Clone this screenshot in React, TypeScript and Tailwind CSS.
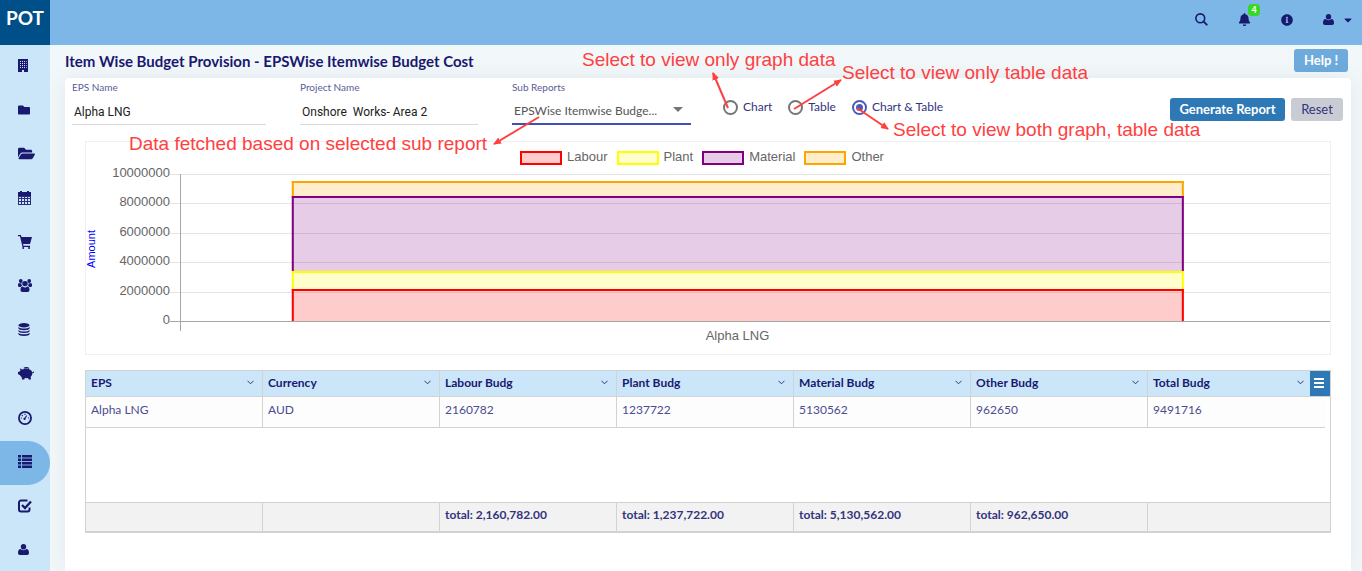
import type { ReactNode } from "react";
import { FaBell, FaCaretDown, FaFolder, FaFolderOpen, FaInfoCircle } from "react-icons/fa";

function BuildingIcon() {
  return (
    <svg width="10" height="13" viewBox="0 0 10 13" fill="currentColor" fillRule="evenodd">
      <path d="M0 0h10v13H6v-2H4v2H0zM2 2v1h1V2zM4 2v1h1V2zM6 2v1h1V2zM8 2v1h.6V2zM2 4v1h1V4zM4 4v1h1V4zM6 4v1h1V4zM8 4v1h.6V4zM2 6v1h1V6zM4 6v1h1V6zM6 6v1h1V6zM8 6v1h.6V6zM2 8v1h1V8zM4 8v1h1V8zM6 8v1h1V8zM8 8v1h.6V8z" />
    </svg>
  );
}

function CalendarIcon() {
  return (
    <svg width="13" height="14" viewBox="0 0 13 14" fill="currentColor" fillRule="evenodd">
      <path d="M2 0h2v1h5V0h2v1h2v4H0V1h2z" />
      <path d="M0 5h13v9H0zM1 6v1h2V6zM4 6v1h2V6zM7 6v1h2V6zM10 6v1h2V6zM1 8v2h2V8zM4 8v2h2V8zM7 8v2h2V8zM10 8v2h2V8zM1 11v2h2v-2zM4 11v2h2v-2zM7 11v2h2v-2zM10 11v2h2v-2z" fillOpacity="0.9" />
    </svg>
  );
}

function CartIcon() {
  return (
    <svg width="14" height="14" viewBox="0 0 14 14" fill="currentColor">
      <path d="M0 0h2.800l.8 2H14l-2 7H5l.5 1.700H12v1.200H4.500L2 1.200H0z" />
      <circle cx="5.200" cy="13" r="1" />
      <circle cx="11" cy="13" r="1" />
    </svg>
  );
}

function TeamIcon() {
  return (
    <svg width="14" height="13" viewBox="0 0 14 13" fill="currentColor">
      <circle cx="2.800" cy="2" r="1.900" />
      <circle cx="11.200" cy="2" r="1.900" />
      <circle cx="7" cy="4.600" r="2.700" />
      <path d="M0 5.500C0 4.600.5 4.200 1.200 4.200h2.300c-.2 1.200.1 2.100.8 2.900-.8.100-1.300.4-1.700.9H1.200C.4 8 0 7.500 0 6.800zM14 5.500c0-.9-.5-1.300-1.200-1.300h-2.300c.2 1.200-.1 2.100-.8 2.900.8.100 1.300.4 1.700.9h1.400c.8 0 1.200-.5 1.200-1.200z" />
      <path d="M2.500 11c0-2.300.8-3.400 2.200-3.400.7.600 1.400.9 2.300.9s1.600-.3 2.300-.9c1.400 0 2.200 1.100 2.200 3.400 0 1.300-.7 2-1.900 2H4.400c-1.200 0-1.900-.7-1.900-2z" />
    </svg>
  );
}

function DatabaseIcon() {
  return (
    <svg width="12" height="13" viewBox="0 0 12 13" fill="currentColor">
      <ellipse cx="6" cy="2.200" rx="5.600" ry="2.200" />
      <path d="M.4 4c1.200 1.100 3.200 1.500 5.600 1.500s4.400-.4 5.600-1.500v1.200C11.600 6.400 9.100 7.200 6 7.200S.4 6.400.4 5.200zM.4 6.900C1.600 8 3.600 8.400 6 8.400s4.400-.4 5.600-1.500v1.200c0 1.200-2.500 2-5.600 2s-5.600-.8-5.600-2zM.4 9.800c1.200 1.100 3.200 1.500 5.600 1.500s4.400-.4 5.600-1.500V11c0 1.200-2.500 2-5.600 2S.4 12.200.4 11z" />
    </svg>
  );
}

function PiggyIcon() {
  return (
    <svg width="16" height="13" viewBox="0 0 16 13" fill="currentColor">
      <path d="M5.500 1.100C6.300.3 7.300 0 8.500 0s2.200.4 2.900 1.200l-.6.600C9.300 1.300 7.700 1.300 6 1.800z" />
      <path d="M1.800 1.200l2.500 1.300C5.400 2 6.800 1.800 8.300 1.800c3.300 0 5.400 1.400 5.900 3.500.6.100 1-.2 1-.9h.8c0 1.200-.6 1.900-1.700 1.900 0 1.500-.6 2.600-1.600 3.500L13 12.500h-2.400l-.5-1.400c-1 .2-2.200.2-3.300 0l-.5 1.400H4l-.3-2.400C2.900 9.600 2.200 8.900 1.900 8L0 7.300V4.900l1.600-.4c.2-.4.5-.7.9-1z" />
    </svg>
  );
}

function GaugeIcon() {
  return (
    <svg width="14" height="14" viewBox="0 0 15 15" fill="none" stroke="currentColor">
      <circle cx="7.500" cy="7.500" r="6.500" strokeWidth="1.900" />
      <path d="M7 8.300L9.500 4.800" strokeWidth="1.300" />
      <circle cx="7" cy="8.500" r="1.200" fill="currentColor" stroke="none" />
      <path d="M3 7.500h1.200M10.800 7.500H12M4.200 4.500l.9.900M7.500 3v1.200" strokeWidth="1.200" />
    </svg>
  );
}

function ListIcon() {
  return (
    <svg width="14" height="13" viewBox="0 0 14 13" fill="currentColor">
      <path d="M0 0h3v2.500H0zM4 0h10v2.500H4zM0 3.500h3V6H0zM4 3.500h10V6H4zM0 7h3v2.500H0zM4 7h10v2.500H4zM0 10.500h3V13H0zM4 10.500h10V13H4z" />
    </svg>
  );
}

function CheckIcon() {
  return (
    <svg width="14" height="14" viewBox="0 0 14 14" fill="none" stroke="currentColor" strokeWidth="2">
      <path d="M9.500 1.500H3a2 2 0 0 0-2 2v7a2 2 0 0 0 2 2h6.500a2 2 0 0 0 2-2V8.500" />
      <path d="M4 6l3 3 6-6.500" strokeWidth="2.400" />
    </svg>
  );
}

function PersonIcon() {
  return (
    <svg width="11" height="11" viewBox="0 0 11 11" fill="currentColor">
      <ellipse cx="5.500" cy="2.800" rx="2.700" ry="2.800" />
      <path d="M0 9c0-2.600.9-3.900 2.700-4 .8.800 1.700 1.200 2.800 1.200S7.500 5.800 8.300 5C10.100 5.100 11 6.400 11 9c0 1.300-.7 2-1.900 2H1.900C.7 11 0 10.300 0 9z" />
    </svg>
  );
}

function SearchIcon() {
  return (
    <svg width="13" height="13" viewBox="0 0 13 13" fill="none" stroke="currentColor" strokeLinecap="round">
      <circle cx="5.300" cy="5.300" r="4.400" strokeWidth="1.600" />
      <path d="M8.700 8.700L11.700 11.700" strokeWidth="1.900" />
    </svg>
  );
}

const navItems: { label: string; icon: ReactNode }[] = [
  { label: "Company", icon: <BuildingIcon /> },
  { label: "Files", icon: <FaFolder size={12} /> },
  { label: "Projects", icon: <FaFolderOpen size={17} /> },
  { label: "Calendar", icon: <CalendarIcon /> },
  { label: "Procurement", icon: <CartIcon /> },
  { label: "Teams", icon: <TeamIcon /> },
  { label: "Data", icon: <DatabaseIcon /> },
  { label: "Budget", icon: <PiggyIcon /> },
  { label: "Dashboard", icon: <GaugeIcon /> },
  { label: "Reports", icon: <ListIcon /> },
  { label: "Approvals", icon: <CheckIcon /> },
  { label: "Account", icon: <PersonIcon /> },
];

const series = [
  { name: "Labour", value: 2160782, stroke: "#ff0000", fill: "#ffcccc" },
  { name: "Plant", value: 1237722, stroke: "#ffff00", fill: "#ffffcc" },
  { name: "Material", value: 5130562, stroke: "#800080", fill: "#e6cce6" },
  { name: "Other", value: 962650, stroke: "#ffa500", fill: "#ffedcc" },
];

const columns = [
  { name: "EPS", value: "Alpha LNG", total: "" },
  { name: "Currency", value: "AUD", total: "" },
  { name: "Labour Budg", value: "2160782", total: "total: 2,160,782.00" },
  { name: "Plant Budg", value: "1237722", total: "total: 1,237,722.00" },
  { name: "Material Budg", value: "5130562", total: "total: 5,130,562.00" },
  { name: "Other Budg", value: "962650", total: "total: 962,650.00" },
  { name: "Total Budg", value: "9491716", total: "" },
];

const ticks = [10000000, 8000000, 6000000, 4000000, 2000000, 0];
const plotHeight = 147;
const axisMax = 10000000;

function Header() {
  return (
    <header className="flex h-[45px] shrink-0 bg-[#7cb7e8] text-[#191970]">
      <a href="#home" className="flex w-[50px] justify-center bg-[#004f89] pt-1 text-[19px]/7 font-bold text-white">
        POT
      </a>
      <div className="flex flex-1 items-center justify-end gap-[30px] pr-2 pb-[6px]">
        <button aria-label="Search"><SearchIcon /></button>
        <button aria-label="Notifications" className="relative">
          <FaBell size={13} />
          <span className="absolute -top-[9px] left-[10px] h-3 w-3 rounded-sm bg-[#35d923] text-center text-[9px]/3 font-bold text-white">4</span>
        </button>
        <button aria-label="Information"><FaInfoCircle size={12} /></button>
        <button aria-label="Account menu" className="flex items-center gap-2">
          <PersonIcon />
          <FaCaretDown size={12} />
        </button>
      </div>
    </header>
  );
}

function Sidebar() {
  return (
    <nav className="w-[50px] shrink-0 overflow-hidden bg-[#cbe6f9] text-[#191970]">
      {navItems.map((item) => (
        <a
          key={item.label}
          href="#nav"
          aria-label={item.label}
          className={
            item.label === "Reports"
              ? "flex h-11 items-center rounded-r-full bg-[#7cb7e8] pb-[3px] pl-[18px]"
              : "flex h-11 items-center pb-[3px] pl-[18px]"
          }
        >
          {item.icon}
        </a>
      ))}
    </nav>
  );
}

function TextField({ id, label, value, className }: { id: string; label: string; value: string; className: string }) {
  return (
    <div className={className}>
      <label htmlFor={id} className="block text-[10px]/[19px] text-[#5b5b9d]">{label}</label>
      <input
        id={id}
        defaultValue={value}
        className="block h-[28px] w-full border-b border-[#d9d9d9] px-0.5 pt-0.5 font-['Roboto',sans-serif] text-xs text-[#212121] outline-none"
      />
    </div>
  );
}

function Filters() {
  return (
    <div className="flex h-[63px] items-start px-[7px]">
      <TextField id="eps" label="EPS Name" value="Alpha LNG" className="mr-[34px] w-[194px]" />
      <TextField id="project" label="Project Name" value="Onshore  Works- Area 2" className="mr-[34px] w-[178px]" />
      <div className="mr-8 w-[179px]">
        <label htmlFor="sub" className="block text-[10px]/[19px] text-[#5b5b9d]">Sub Reports</label>
        <div className="relative">
          <select
            id="sub"
            className="block h-[28px] w-full appearance-none border-b-2 border-[#3f51b5] bg-transparent px-0.5 pt-0.5 text-xs text-[#555] outline-none"
          >
            <option>EPSWise Itemwise Budge...</option>
          </select>
          <span className="pointer-events-none absolute top-[10px] right-2 border-x-5 border-t-5 border-x-transparent border-t-[#757575]" />
        </div>
      </div>
      <div className="flex gap-4 pt-[19px] text-xs/5 text-[#34347e]">
        {["Chart", "Table", "Chart & Table"].map((name) => (
          <label key={name} className="flex items-center gap-[5px]">
            <input
              type="radio"
              name="view"
              defaultChecked={name === "Chart & Table"}
              className="size-[15px] appearance-none rounded-full border-2 border-[#757575] bg-white bg-clip-content p-0.5 checked:border-[#4a5abb] checked:bg-[#4a5abb]"
            />
            {name}
          </label>
        ))}
      </div>
      <div className="ml-auto flex gap-1.5 pt-5 pr-px text-[13px]">
        <button className="h-[23px] w-[115px] rounded-[3px] bg-[#2e79b5] font-bold text-white">Generate Report</button>
        <button className="h-[23px] w-[52px] rounded-[3px] bg-[#c9ccd3] text-[#34347e]">Reset</button>
      </div>
    </div>
  );
}

function Chart() {
  return (
    <section className="mx-5 h-[214px] border border-[#f0f0f0] font-['Liberation_Sans',sans-serif] text-[13px] text-[#666]">
      <ul className="flex h-8 items-center justify-center gap-[9px] pr-3">
        {series.map((item) => (
          <li key={item.name} className="flex items-center gap-[5px]">
            <span className="h-[14px] w-[42px] border-2" style={{ borderColor: item.stroke, backgroundColor: item.fill }} />
            <span className="pb-0.5 leading-4">{item.name}</span>
          </li>
        ))}
      </ul>
      <div className="flex h-[153px]">
        <div className="flex w-3 items-center justify-center pr-0.5 pb-1">
          <span className="rotate-180 text-[11px]/3 text-[#0000ff] [writing-mode:vertical-rl]">Amount</span>
        </div>
        <div className="-mt-[9px] flex h-[163px] w-[72px] flex-col justify-between text-right">
          {ticks.map((tick) => (
            <div key={tick} className="leading-4">{tick}</div>
          ))}
        </div>
        <svg className="h-[158px] flex-1" aria-hidden="true">
          {ticks.map((tick) => {
            const y = Math.round(((axisMax - tick) / axisMax) * plotHeight);
            return <rect key={tick} x="0" y={y} width="100%" height="1" fill={tick === 0 ? "#a6a6a6" : "#e4e4e4"} />;
          })}
          <rect x="10" y="0" width="1" height="157" fill="#a6a6a6" />
          <svg x="10.500%" width="76.900%" height="147" overflow="visible">
            {series.map((item, index) => {
              const sum = series.slice(0, index + 1).reduce((total, part) => total + part.value, 0);
              const top = Math.round(plotHeight - (sum / axisMax) * plotHeight);
              const bottom = Math.round(plotHeight - ((sum - item.value) / axisMax) * plotHeight);
              const height = bottom - top;
              return (
                <g key={item.name}>
                  <rect x="0" y={top} width="100%" height={height} fill={item.stroke} fillOpacity="0.2" />
                  <rect x="0" y={top} width="100%" height="2" fill={item.stroke} />
                  <rect x="0" y={top} width="2" height={height} fill={item.stroke} />
                  <svg x="100%" overflow="visible">
                    <rect x="-2" y={top} width="2" height={height} fill={item.stroke} />
                  </svg>
                </g>
              );
            })}
          </svg>
        </svg>
      </div>
      <div className="pt-px pl-[59px] text-center leading-4">Alpha LNG</div>
    </section>
  );
}

function ChevronDown() {
  return (
    <svg width="7" height="5" viewBox="0 0 7 5" fill="none" stroke="#34347e">
      <path d="M.5.8l3 3 3-3" />
    </svg>
  );
}

function BudgetTable() {
  return (
    <table className="w-full table-fixed border-separate border-spacing-0 border border-b-2 border-[#d2d2d2] text-left text-xs/4 text-[#34347e]">
      <colgroup>
        {columns.map((column) => (
          <col key={column.name} className={column.name === "Total Budg" ? "" : "w-[14.23%]"} />
        ))}
        <col className="w-[5px]" />
      </colgroup>
      <thead className="bg-[#cbe6f9] text-[#191970]">
        <tr>
          {columns.map((column) => {
            const last = column.name === "Total Budg";
            return (
              <th
                key={column.name}
                colSpan={last ? 2 : 1}
                className={last ? "h-[26px] border-b border-[#d2d2d2] p-0" : "h-[26px] border-r border-b border-[#d2d2d2] p-0"}
              >
                <div className="flex h-[25px] items-center justify-between pl-[5px]">
                  <span className="pb-0.5">{column.name}</span>
                  <span className="flex items-center">
                    <button aria-label={"Menu for " + column.name} className={last ? "mr-1.5 pb-0.5" : "mr-2 pb-0.5"}>
                      <ChevronDown />
                    </button>
                    {last && (
                      <button aria-label="Grid menu" className="flex h-[25px] w-5 flex-col items-center justify-center gap-0.5 bg-[#2e79b5] pr-0.5 pb-0.5">
                        <span className="h-0.5 w-2.5 bg-white" />
                        <span className="h-0.5 w-2.5 bg-white" />
                        <span className="h-0.5 w-2.5 bg-white" />
                      </button>
                    )}
                  </span>
                </div>
              </th>
            );
          })}
        </tr>
      </thead>
      <tbody className="text-[#4b4b90]">
        <tr>
          {columns.map((column) => (
            <td
              key={column.name}
              className="h-[31px] border-r border-b border-[#d2d2d2] bg-[#fdfdfd] px-[5px] py-0 pb-1 nth-7:border-r-0"
            >
              {column.value}
            </td>
          ))}
          <td />
        </tr>
        <tr>
          <td colSpan={8} className="h-[74px]" />
        </tr>
      </tbody>
      <tfoot className="bg-[#f2f2f2] font-bold">
        <tr>
          {columns.map((column) => (
            <td
              key={column.name}
              colSpan={column.name === "Total Budg" ? 2 : 1}
              className="h-[29px] border-t border-r border-[#d2d2d2] px-[5px] py-0 pb-1 last:border-r-0"
            >
              {column.total}
            </td>
          ))}
        </tr>
      </tfoot>
    </table>
  );
}

const arrows = [
  { from: [728, 108], to: [713, 73] },
  { from: [794, 109], to: [841, 80] },
  { from: [857, 108], to: [888, 129] },
  { from: [539, 117], to: [494, 144] },
];

function Annotations() {
  return (
    <div className="pointer-events-none absolute inset-0 overflow-hidden font-['Liberation_Sans',sans-serif] text-[19px]/6 whitespace-nowrap text-[#ff4040]">
      <svg className="absolute inset-0 size-full" aria-hidden="true">
        <defs>
          <marker id="head" viewBox="0 0 8 8" refX="7" refY="4" markerWidth="8" markerHeight="8" markerUnits="userSpaceOnUse" orient="auto">
            <path d="M0 0.500L8 4L0 7.500z" fill="#ff4040" />
          </marker>
        </defs>
        {arrows.map(({ from, to }) => (
          <line key={from[0]} x1={from[0]} y1={from[1]} x2={to[0]} y2={to[1]} stroke="#ff4040" strokeWidth="2" markerEnd="url(#head)" />
        ))}
      </svg>
      <span className="absolute top-[48px] left-[582px]">Select to view only graph data</span>
      <span className="absolute top-[61px] left-[842px]">Select to view only table data</span>
      <span className="absolute top-[118px] left-[893px]">Select to view both graph, table data</span>
      <span className="absolute top-[132px] left-[129px]">Data fetched based on selected sub report</span>
    </div>
  );
}

export default function App() {
  return (
    <div className="relative flex h-screen flex-col overflow-hidden font-['Lato',sans-serif]">
      <Header />
      <div className="flex min-h-0 flex-1">
        <Sidebar />
        <main className="flex min-w-0 flex-1 flex-col bg-[#f2f7fa] pr-[11px] pl-[15px]">
          <div className="flex h-[33px] shrink-0 items-center justify-between pr-[3px]">
            <h1 className="text-[15px] font-bold text-[#191970]">Item Wise Budget Provision - EPSWise Itemwise Budget Cost</h1>
            <button className="mb-0.5 h-[23px] w-[54px] rounded-[3px] bg-[#6eabdc] text-[13px] font-bold text-white">Help !</button>
          </div>
          <div className="flex-1 rounded-t bg-white shadow-[0_0_20px_rgba(0,60,60,0.08)]">
            <Filters />
            <Chart />
            <div className="px-5 pt-[15px]">
              <BudgetTable />
            </div>
          </div>
        </main>
      </div>
      <Annotations />
    </div>
  );
}
